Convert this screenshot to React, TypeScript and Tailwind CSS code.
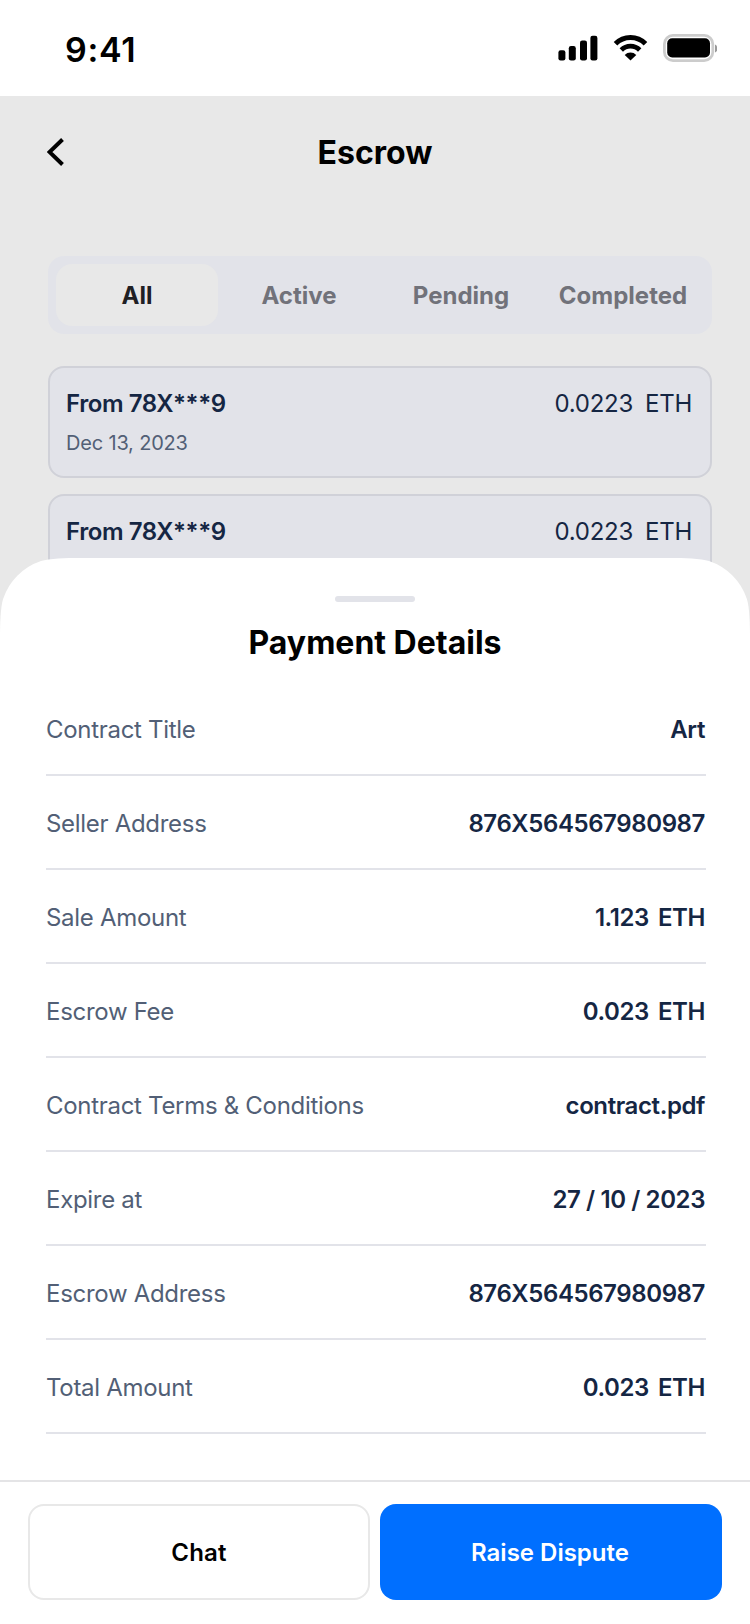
const tabs = ["All", "Active", "Pending", "Completed"];

const payments = [
  { id: 1, from: "From 78X***9", date: "Dec 13, 2023", amount: "0.0223", unit: "ETH" },
  { id: 2, from: "From 78X***9", date: "Dec 13, 2023", amount: "0.0223", unit: "ETH" },
];

type Detail = { label: string; value: string; unit?: string };

const details: Detail[] = [
  { label: "Contract Title", value: "Art" },
  { label: "Seller Address", value: "876X564567980987" },
  { label: "Sale Amount", value: "1.123", unit: "ETH" },
  { label: "Escrow Fee", value: "0.023", unit: "ETH" },
  { label: "Contract Terms & Conditions", value: "contract.pdf" },
  { label: "Expire at", value: "27 / 10 / 2023" },
  { label: "Escrow Address", value: "876X564567980987" },
  { label: "Total Amount", value: "0.023", unit: "ETH" },
];

function StatusBar() {
  return (
    <div className="flex h-24 shrink-0 items-start justify-between bg-white pl-[65px] pr-[33px] pt-[34px]">
      <span className="mt-[-4px] text-[34px] leading-[40px] font-semibold tracking-[0.7px] text-black">9:41</span>
      <div className="flex items-start">
        <svg width="42" height="28" viewBox="0 0 42 28" className="mr-[13px]">
          <rect x="0.4" y="16.2" width="7" height="10.2" rx="2.2" />
          <rect x="10.8" y="12" width="7" height="14.4" rx="2.2" />
          <rect x="22" y="6.4" width="7" height="20" rx="2.2" />
          <rect x="32.4" y="1.8" width="7" height="24.6" rx="2.2" />
        </svg>
        <svg width="38" height="28" viewBox="0 0 38 28" className="mr-[12px]" fill="none" stroke="#000">
          <path d="M2.5 9.8a21 21 0 0 1 30 0" strokeWidth="5" />
          <path d="M8.3 16a13 13 0 0 1 18.4 0" strokeWidth="4.8" />
          <path d="M17.5 26.6l-5.8-5.6a8.2 8.2 0 0 1 11.6 0z" fill="#000" stroke="none" />
        </svg>
        <svg width="54" height="28" viewBox="0 0 54 28">
          <rect x="1.4" y="1.4" width="48.4" height="25.2" rx="8.5" fill="none" stroke="#000" strokeOpacity="0.2" strokeWidth="2.8" />
          <path d="M52 10.5v8c1.8-.8 2.6-2.2 2.6-4s-.8-3.2-2.6-4z" fillOpacity="0.4" />
          <rect x="4.2" y="4.2" width="42.8" height="19.2" rx="5" />
        </svg>
      </div>
    </div>
  );
}

export default function App() {
  return (
    <div className="flex h-[1624px] w-[750px] flex-col overflow-hidden bg-[#e8e8e8] font-['Inter',sans-serif]">
      <StatusBar />

      <header className="grid h-[112px] shrink-0 grid-cols-[1fr_auto_1fr] items-center pr-12 pl-[47px]">
        <svg width="18" height="28" viewBox="0 0 18 28" fill="none" stroke="#000" strokeWidth="4">
          <path d="M15.5 1.5L2.5 14l13 12.5" />
        </svg>
        <h1 className="mt-[2px] ml-px text-[32px] leading-[40px] font-bold text-black">Escrow</h1>
      </header>

      <nav className="mt-12 mr-[38px] ml-12 flex h-[78px] shrink-0 rounded-2xl bg-[#e2e3e9] p-2">
        {tabs.map((tab, i) => (
          <button
            key={tab}
            className={
              i === 0
                ? "flex-1 basis-0 rounded-2xl bg-[#e8e8e8] pt-[2px] text-2xl font-bold text-[#1f2024]"
                : "flex-1 basis-0 pt-[2px] text-2xl font-bold text-[#71727a]"
            }
          >
            {tab}
          </button>
        ))}
      </nav>

      <div className="mt-8 flex h-[192px] shrink-0 flex-col gap-4 pr-[38px] pl-12">
        {payments.map((p) => (
          <div
            key={p.id}
            className="flex h-28 shrink-0 justify-between rounded-2xl border-2 border-[#d0d1d8] bg-[#e2e3e9] pt-[20px] pr-[18px] pl-4 text-[#152643]"
          >
            <div className="flex flex-col">
              <span className="text-2xl leading-8 font-semibold tracking-[-0.42px]">{p.from}</span>
              <span className="mt-[9px] text-xl leading-7 tracking-[-0.18px] text-[#525f76]">{p.date}</span>
            </div>
            <div className="flex gap-3 text-2xl leading-8 tracking-[-0.25px]">
              <span>{p.amount}</span>
              <span>{p.unit}</span>
            </div>
          </div>
        ))}
      </div>

      <section className="relative flex flex-1 flex-col bg-white pt-[38px] [clip-path:path('M0_80C0_66_0.5_49_3.1_41A60_60_0_0_1_41_3.1C49_0.5_66_0_80_0H670C684_0_701_0.5_709_3.1A60_60_0_0_1_746.9_41C749.5_49_750_66_750_80V1066H0Z')]">
        <div className="h-[6px] w-20 self-center rounded-[3px] bg-[#e2e3e9]" />
        <h2 className="mt-[21px] text-center text-[32px] leading-[40px] font-bold text-black">
          Payment Details
        </h2>
        <dl className="mt-[19px] pr-11 pl-[46px]">
          {details.map(({ label, value, unit }) => (
            <div
              key={label}
              className="flex h-[94px] items-center justify-between border-b-2 border-[#e2e3e9] pt-1 pr-px text-2xl"
            >
              <dt className="tracking-[-0.3px] text-[#525f76]">{label}</dt>
              <dd className="flex gap-[9px] font-semibold tracking-[-0.4px] text-[#152643]">
                <span>{value}</span>
                {unit && <span>{unit}</span>}
              </dd>
            </div>
          ))}
        </dl>
        <footer className="mt-auto flex h-36 gap-[10px] border-t-2 border-[#e4e4e6] px-7 pt-[22px] text-2xl">
          <button className="h-24 w-[342px] rounded-2xl border-2 border-[#e8e8e8] pt-[2px] font-semibold tracking-[0.2px] text-black">
            Chat
          </button>
          <button className="h-24 w-[342px] rounded-2xl bg-[#006fff] pt-[2px] pr-[2px] font-semibold text-white">
            Raise Dispute
          </button>
        </footer>
      </section>
    </div>
  );
}
